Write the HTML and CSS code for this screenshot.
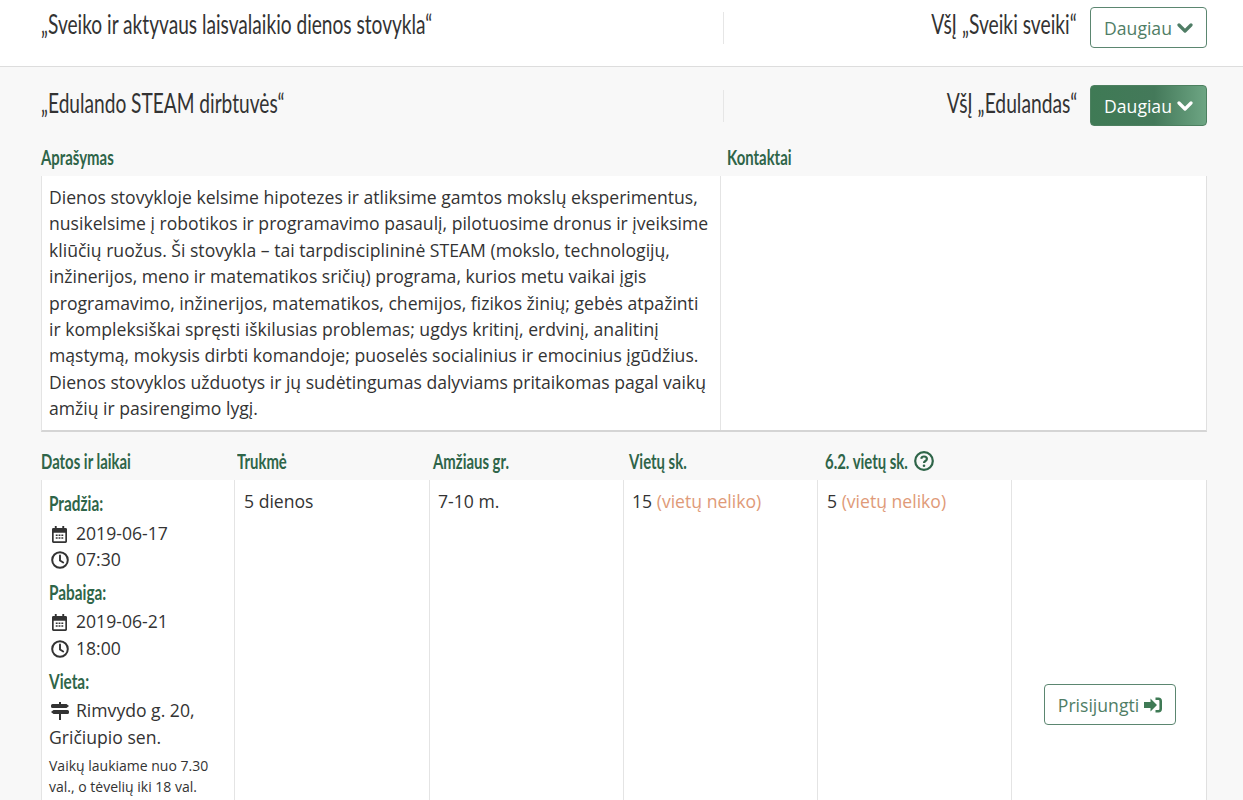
FILE: index.html
```html
<!DOCTYPE html>
<html lang="lt">
<head>
<meta charset="utf-8">
<title>Stovyklos</title>
<link rel="stylesheet" href="styles.css">
</head>
<body>
<svg class="defs" width="0" height="0" aria-hidden="true">
  <symbol id="i-chev" viewBox="0 0 16 12"><path d="M2 3l6 6 6-6" fill="none" stroke="currentColor" stroke-width="3.2" stroke-linecap="round" stroke-linejoin="round"/></symbol>
  <symbol id="i-cal" viewBox="0 0 16 18"><path fill-rule="evenodd" d="M3 0h2v2h6V0h2v2h1.500A1.500 1.500 0 0 1 16 3.500v13a1.500 1.500 0 0 1-1.500 1.500h-13A1.500 1.500 0 0 1 0 16.500v-13A1.500 1.500 0 0 1 1.500 2H3zM1.800 7v9.200h12.400V7z"/><path d="M4 9h2v1.600H4zM7 9h2v1.600H7zM10 9h2v1.600h-2zM4 12h2v1.600H4zM7 12h2v1.600H7zM10 12h2v1.600h-2z"/></symbol>
  <symbol id="i-clock" viewBox="0 0 18 18"><circle cx="9" cy="9" r="7.800" fill="none" stroke="currentColor" stroke-width="2"/><path d="M9 4.500V9.500l3.200 2" fill="none" stroke="currentColor" stroke-width="1.900" stroke-linecap="round"/></symbol>
  <symbol id="i-sign" viewBox="0 0 18 18"><path d="M8 0h2v2h5.500L18 4l-2.500 2H1.500A1.500 1.500 0 0 1 0 4.500v-1A1.500 1.500 0 0 1 1.500 2H8zM0 10l2.500-2h14a1.500 1.500 0 0 1 1.500 1.500v1a1.500 1.500 0 0 1-1.500 1.500H10v6H8v-6H2.500z"/></symbol>
  <symbol id="i-login" viewBox="0 0 18 16"><path d="M0 5h6.500V1.500L13 8l-6.500 6.500V11H0z"/><path d="M11.500 1.800h3A2.300 2.300 0 0 1 16.700 4v8a2.300 2.300 0 0 1-2.200 2.200h-3" fill="none" stroke="currentColor" stroke-width="2.600"/></symbol>
  <symbol id="i-help" viewBox="0 0 20 20"><circle cx="10" cy="10" r="8.800" fill="none" stroke="currentColor" stroke-width="2.200"/><path d="M7.200 7.800A2.800 2.800 0 0 1 10 5.500c1.700 0 2.900 1 2.900 2.400 0 2.200-2.900 2-2.900 4.100" fill="none" stroke="currentColor" stroke-width="2.200"/><circle cx="10" cy="14.700" r="1.300" fill="currentColor"/></symbol>
</svg>

<header class="row row-first">
  <h2 class="title">„Sveiko ir aktyvaus laisvalaikio dienos stovykla“</h2>
  <div class="org">
    <span class="org-name">VšĮ „Sveiki sveiki“</span>
    <button class="btn">Daugiau <svg class="chev"><use href="#i-chev"/></svg></button>
  </div>
</header>

<main class="open">
  <div class="row row-open">
    <h2 class="title">„Edulando STEAM dirbtuvės“</h2>
    <div class="org">
      <span class="org-name">VšĮ „Edulandas“</span>
      <button class="btn btn-active">Daugiau <svg class="chev"><use href="#i-chev"/></svg></button>
    </div>
  </div>

  <div class="info-head">
    <h3 class="label">Aprašymas</h3>
    <h3 class="label">Kontaktai</h3>
  </div>
  <section class="info">
    <p class="desc">Dienos stovykloje kelsime hipotezes ir atliksime gamtos mokslų eksperimentus, nusikelsime į robotikos ir programavimo pasaulį, pilotuosime dronus ir įveiksime kliūčių ruožus. Ši stovykla – tai tarpdisciplininė STEAM (mokslo, technologijų, inžinerijos, meno ir matematikos sričių) programa, kurios metu vaikai įgis programavimo, inžinerijos, matematikos, chemijos, fizikos žinių; gebės atpažinti ir kompleksiškai spręsti iškilusias problemas; ugdys kritinį, erdvinį, analitinį mąstymą, mokysis dirbti komandoje; puoselės socialinius ir emocinius įgūdžius. Dienos stovyklos užduotys ir jų sudėtingumas dalyviams pritaikomas pagal vaikų amžių ir pasirengimo lygį.</p>
    <div class="contacts"></div>
  </section>

  <div class="table-head">
    <h3 class="label">Datos ir laikai</h3>
    <h3 class="label">Trukmė</h3>
    <h3 class="label">Amžiaus gr.</h3>
    <h3 class="label">Vietų sk.</h3>
    <div class="label-help"><h3 class="label label-fixed">6.2. vietų sk.</h3><svg class="help"><use href="#i-help"/></svg></div>
    <span></span>
  </div>
  <section class="table">
    <div class="cell cell-dates">
      <h4 class="label sub">Pradžia:</h4>
      <div class="line"><svg class="ic ic-cal"><use href="#i-cal"/></svg>2019-06-17</div>
      <div class="line"><svg class="ic"><use href="#i-clock"/></svg>07:30</div>
      <h4 class="label sub">Pabaiga:</h4>
      <div class="line"><svg class="ic ic-cal"><use href="#i-cal"/></svg>2019-06-21</div>
      <div class="line"><svg class="ic"><use href="#i-clock"/></svg>18:00</div>
      <h4 class="label sub">Vieta:</h4>
      <div class="line"><svg class="ic"><use href="#i-sign"/></svg>Rimvydo g. 20,<br>Gričiupio sen.</div>
      <p class="note">Vaikų laukiame nuo 7.30 val., o tėvelių iki 18 val.</p>
    </div>
    <div class="cell">5 dienos</div>
    <div class="cell cell-tight">7-10 m.</div>
    <div class="cell cell-tight">15 <span class="none">(vietų neliko)</span></div>
    <div class="cell">5 <span class="none">(vietų neliko)</span></div>
    <div class="cell cell-action">
      <button class="btn">Prisijungti <svg class="login"><use href="#i-login"/></svg></button>
    </div>
  </section>
</main>
</body>
</html>
```

FILE: styles.css
```css
* { box-sizing: border-box; }
html, body { margin: 0; height: 800px; overflow: hidden; }
body {
  background: #fff;
  color: #333;
  font-family: "Open Sans", sans-serif;
  font-size: 17.6px;
  line-height: 26.4px;
}
.defs { position: absolute; }
.row {
  display: grid;
  grid-template-columns: 682px 484px;
  align-items: center;
  padding-left: 41px;
}
.row-first {
  height: 67px;
  padding-top: 7px;
  padding-bottom: 18px;
  border-bottom: 1px solid #ddd;
}
.row-first .title { margin-top: -7px; }
.row-first .org-name { margin-top: -7px; }
.row-open { height: 41px; }
.title {
  margin: -5px 0 0;
  font-family: Lato, sans-serif;
  font-weight: 400;
  font-size: 26px;
  line-height: 32px;
  color: #333;
  white-space: nowrap;
  transform: scaleX(.735);
  transform-origin: left center;
}
.org {
  display: flex;
  justify-content: flex-end;
  align-items: center;
  gap: 13px;
  height: 32px;
  border-left: 1px solid #e6e6e6;
}
.org-name {
  margin-top: -5px;
  font-family: Lato, sans-serif;
  font-size: 26px;
  line-height: 32px;
  color: #333;
  white-space: nowrap;
  transform: scaleX(.74);
  transform-origin: right center;
}
.btn {
  display: inline-flex;
  align-items: center;
  justify-content: center;
  gap: 5px;
  height: 41px;
  width: 117px;
  padding: 0;
  border: 1px solid #5b8670;
  border-radius: 4px;
  background: #fff;
  color: #4f7d65;
  font-family: "Open Sans", sans-serif;
  font-size: 17.6px;
  white-space: nowrap;
}
.btn-active {
  border-color: #4d8060;
  background: linear-gradient(90deg, #3f7a55 0%, #44795a 55%, #6da583 100%);
  color: #fff;
}
.chev { width: 16px; height: 12px; }
.open {
  background: #f8f8f8;
  height: 733px;
  padding: 18px 36px 0 41px;
}
.open .row-open { padding-left: 0; }
.label {
  margin: 0;
  font-family: Lato, sans-serif;
  font-weight: 700;
  font-size: 21px;
  line-height: 24px;
  color: #2f6549;
  white-space: nowrap;
  transform: scaleX(.71);
  transform-origin: left center;
}
.info-head {
  display: grid;
  grid-template-columns: 686px 480px;
  margin-top: 19px;
  height: 31px;
}
.info {
  display: grid;
  grid-template-columns: 679px 1fr;
  height: 256px;
  background: #fff;
  border-bottom: 2px solid #d5d5d5;
  border-left: 1px solid #e4e4e4;
  border-right: 1px solid #e0e0e0;
}
.desc {
  margin: 0;
  padding: 8px 7px 0;
  border-right: 1px solid #e4e4e4;
}
.table-head {
  display: grid;
  grid-template-columns: 196px 196px 196px 196px 196px 186px;
  margin-top: 17px;
  height: 31px;
  align-items: start;
}
.label-help { display: flex; align-items: center; }
.label-fixed { width: 89px; flex: none; }
.help { width: 20px; height: 20px; color: #2f6549; }
.table {
  display: grid;
  grid-template-columns: 193px 195px 194px 194px 194px 1fr;
  height: 320px;
  background: #fff;
  border-left: 1px solid #e4e4e4;
  border-right: 1px solid #e0e0e0;
}
.cell {
  padding: 8px 8px 0 9px;
  border-right: 1px solid #e4e4e4;
}
.cell-tight { padding-left: 8px; }
.cell-dates { padding: 9px 8px 0 7px; }
.cell-action {
  border-right: 0;
  padding: 204px 0 0 2px;
  display: flex;
  justify-content: center;
  align-items: flex-start;
}
.cell-action .btn { width: 132px; }
.sub {
  margin: 0 0 3.5px;
  line-height: 27px;
  transform: scaleX(.73);
}
.line + .sub { margin-top: 5.5px; }
.ic { width: 18px; height: 18px; margin: 0 7px 0 2px; vertical-align: -3px; fill: #333; color: #333; }
.ic-cal { width: 15px; height: 17px; margin: 0 9px 0 3px; }
.note {
  margin: 5px 0 0;
  font-size: 14px;
  line-height: 21px;
}
.none { color: #e09a78; }
.login { width: 18px; height: 16px; fill: #3f7a55; color: #3f7a55; }
```
